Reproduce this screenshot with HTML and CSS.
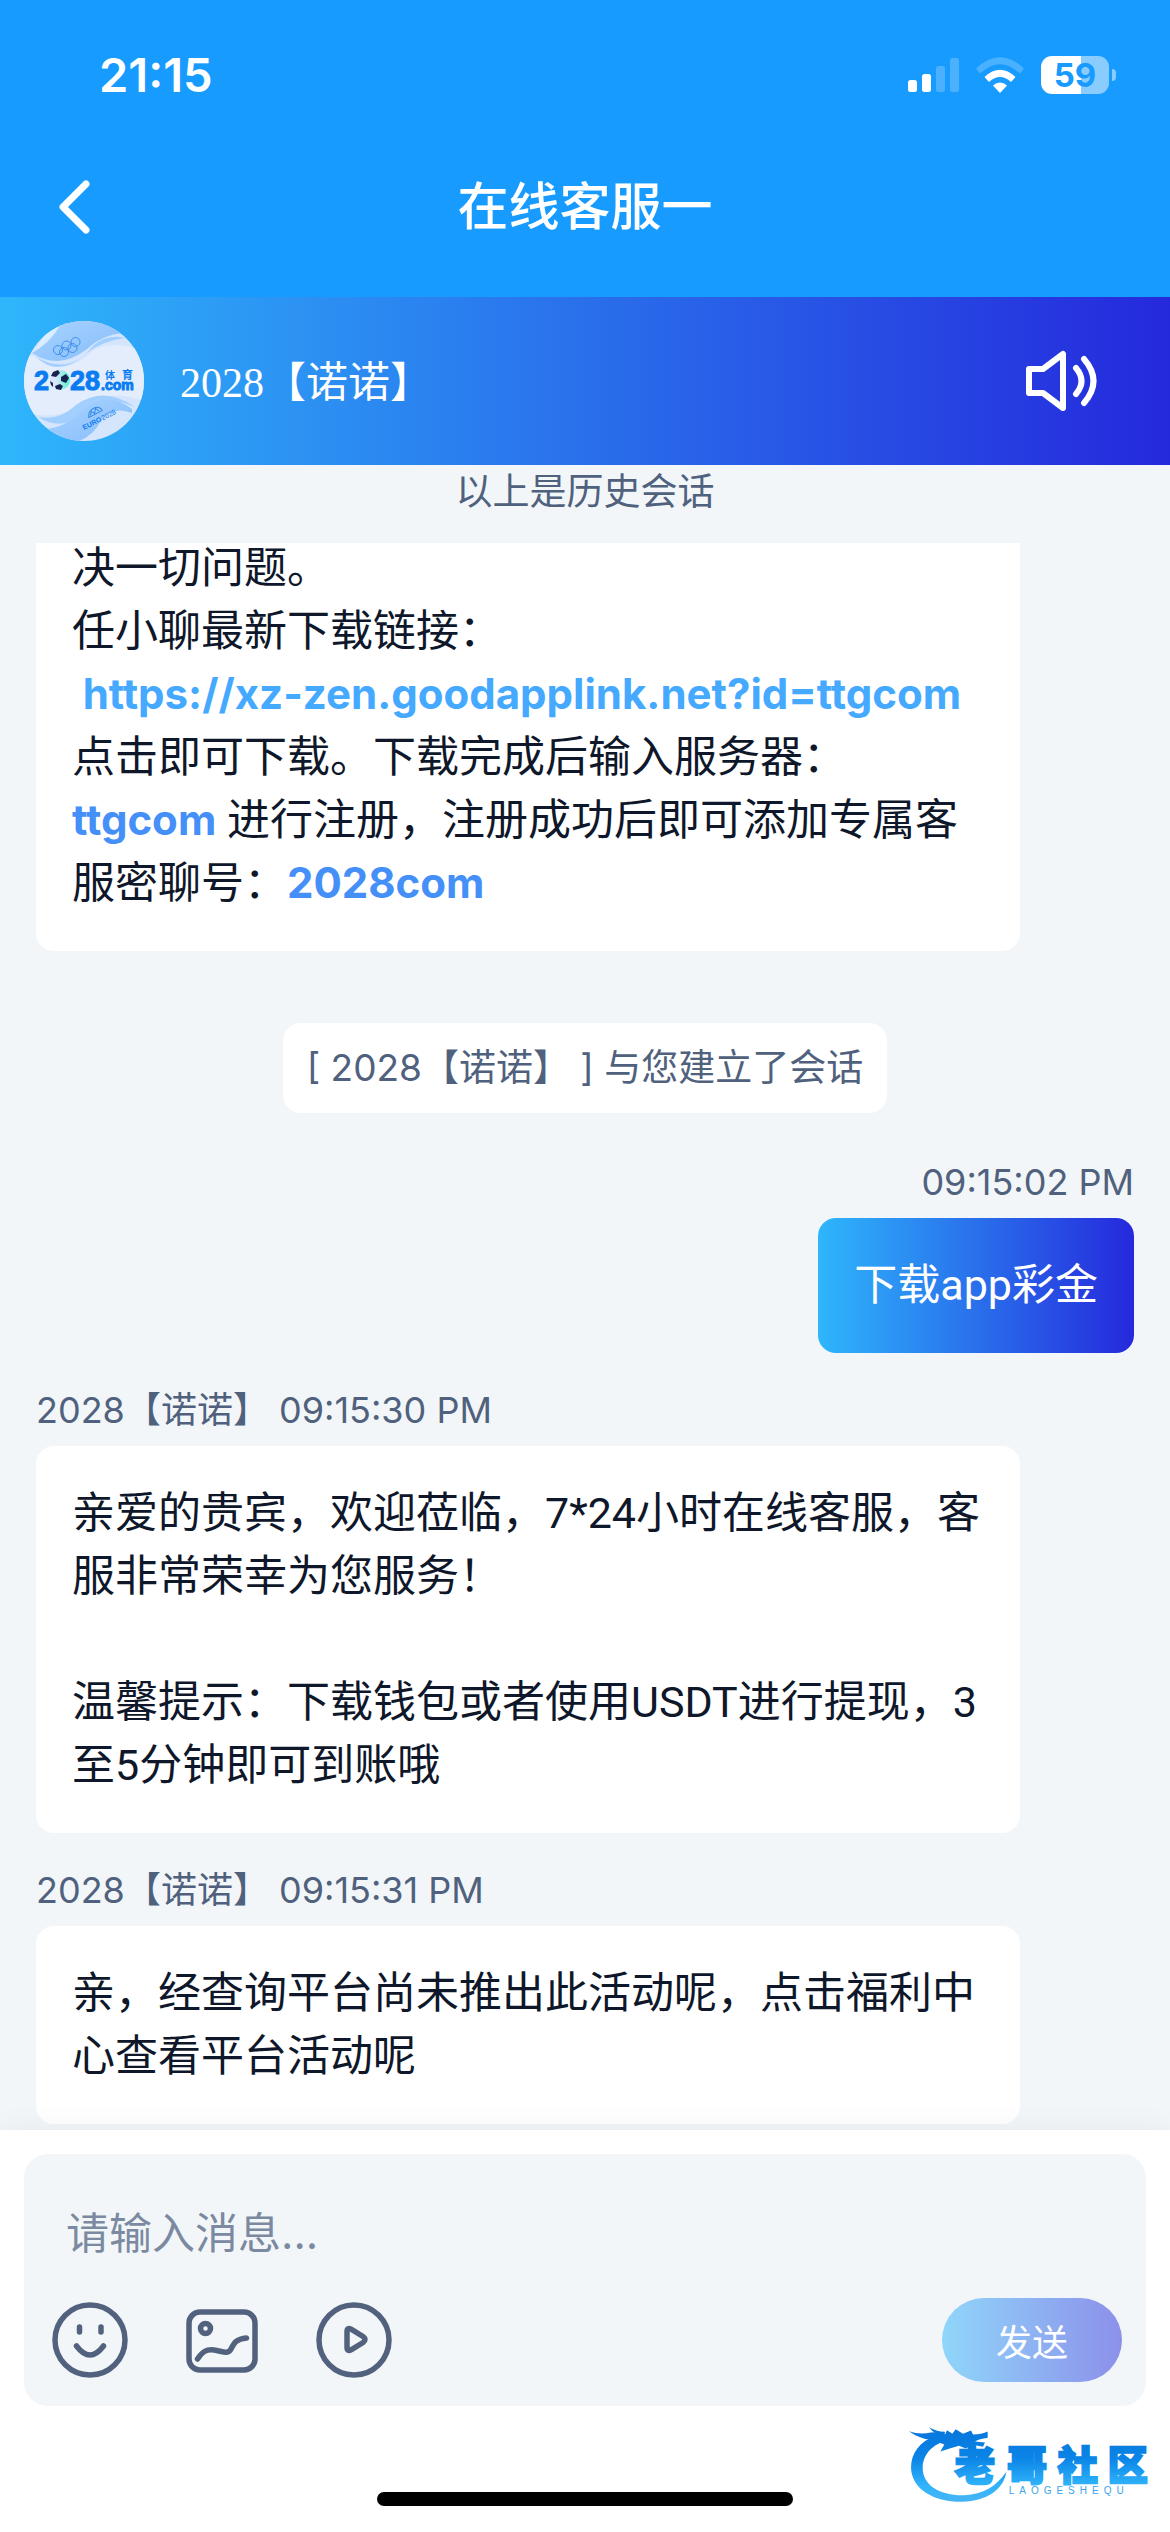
FILE: index.html
```
<!DOCTYPE html>
<html lang="zh-CN">
<head>
<meta charset="utf-8">
<meta name="viewport" content="width=device-width, initial-scale=1">
<title>在线客服一</title>
<link rel="stylesheet" href="styles.css">
</head>
<body>
<div class="app">
  <div class="status">
    <span class="clock">21:15</span>
    <div class="indicators">
      <svg class="signal" viewBox="0 0 51 34" aria-hidden="true">
        <g fill="#fff"><rect y="22" width="9" height="12" rx="2.5"/><rect x="14" y="16" width="9" height="18" rx="2.5"/></g>
        <g fill="#fff" opacity=".22"><rect x="28" y="8" width="9" height="26" rx="2.5"/><rect x="42" width="9" height="34" rx="2.5"/></g>
      </svg>
      <svg class="wifi" viewBox="0 0 48 36" aria-hidden="true">
        <path d="M0 11.500Q24-11 48 11.500L44 16.500Q24-2 4 16.500Z" fill="#fff" opacity=".22"/>
        <path d="M8.500 20Q24 5.500 39.500 20L35 25Q24 15 13 25Z" fill="#fff"/>
        <path d="M17 28.500Q24 22.500 31 28.500L24 36Z" fill="#fff"/>
      </svg>
      <span class="battery"><span class="battery-level">59</span></span>
    </div>
  </div>
  <header class="nav">
    <button class="back" type="button" aria-label="返回">
      <svg viewBox="0 0 32 54" aria-hidden="true"><path d="M28 4L5 27L28 50" fill="none" stroke="#fff" stroke-width="7" stroke-linecap="round" stroke-linejoin="round"/></svg>
    </button>
    <h1 class="title">在线客服一</h1>
  </header>
  <div class="agent">
    <svg class="avatar" viewBox="0 0 120 120" role="img" aria-label="2028体育">
      <defs>
        <clipPath id="disc"><circle cx="60" cy="60" r="60"/></clipPath>
        <linearGradient id="wave" x1="0" x2="1" y1="0" y2="1"><stop offset="0" stop-color="#a9d3ff"/><stop offset="1" stop-color="#86bdfb"/></linearGradient>
        <linearGradient id="ball" x1="0" x2="1"><stop offset=".3" stop-color="#dbe6fb"/><stop offset="1" stop-color="#4ff0d0"/></linearGradient>
      </defs>
      <g clip-path="url(#disc)">
        <rect width="120" height="120" fill="#d5e6fc"/>
        <path d="M0 30Q45 58 68 30Q88 18 120 30V80Q95 70 70 78Q40 100 0 92Z" fill="#e3edfc"/>
        <path d="M0 0H28L10 32Q32 10 45 0Z" fill="#d9efff"/>
        <path d="M12 36Q45 55 68 26Q82 12 101 17Q78 20 63 32Q35 58 12 36Z" fill="#a3cfff"/>
        <path d="M8 32Q26 22 35 6Q45-5 60 0Q80 0 98 12Q78 14 63 28Q35 50 8 32Z" fill="url(#wave)"/>
        <path d="M14 96Q35 100 52 84Q80 64 111 86Q80 72 60 90Q40 112 14 96Z" fill="#a3cfff"/>
        <path d="M108 92Q88 84 76 101Q70 114 55 120Q38 120 22 108Q42 106 58 90Q82 68 108 88Z" fill="url(#wave)"/>
        <g fill="none" stroke="#3589e6" stroke-width=".9"><circle cx="34" cy="29" r="4.500"/><circle cx="42.500" cy="24.500" r="4.500"/><circle cx="51.500" cy="21" r="4.500"/><circle cx="40" cy="31" r="4.500"/><circle cx="48.500" cy="27" r="4.500"/></g>
        <g class="logo-text heavy"><text x="10" y="69" font-size="27">2</text><text x="46" y="69" font-size="27">28</text><text x="77" y="69" font-size="14">.com</text></g>
        <g class="logo-text"><text class="logo-cjk" x="81" y="58" font-size="10">体</text><text class="logo-cjk" x="98" y="58" font-size="11">育</text></g>
        <circle cx="36" cy="59" r="10" fill="url(#ball)"/>
        <path d="M29 51l5-2 2 3-4 4-5-1zM37 56l5-3 3 4-3 5-5-2zM31 65l5-2 3 2-2 4-5-1zM26 60l3 2v4l-2-2z" fill="#16244f"/>
        <g transform="rotate(-27 60 109)"><text class="logo-text" x="60" y="109" font-size="7">EURO</text><text class="logo-text thin" x="81" y="109" font-size="7">2028</text><path d="M70 100q2-6 8-6 7 0 7 6zM72 99l3-3 2 3 3-4 2 4" fill="none" stroke="#3589e6"/></g>
      </g>
    </svg>
    <span class="agent-name">2028【诺诺】</span>
    <button class="sound" type="button" aria-label="声音">
      <svg viewBox="0 0 72 62" aria-hidden="true"><g fill="none" stroke="#fff" stroke-width="6" stroke-linecap="round" stroke-linejoin="round"><path d="M3 19H17L37 4V58L17 43H3Z"/><path d="M50 18Q61 31 50 44M58 9Q77 31 58 53"/></g></svg>
    </button>
  </div>

  <main class="chat">
    <p class="notice">以上是历史会话</p>
    <div class="messages">
      <div class="bubble scrolled">决一切问题。<br>任小聊最新下载链接：<br>&nbsp;<a class="url" href="https://xz-zen.goodapplink.net?id=ttgcom">https://xz-zen.goodapplink.net?id=ttgcom</a><br>点击即可下载。下载完成后输入服务器：<br><b>ttgcom</b> 进行注册，注册成功后即可添加专属客<br>服密聊号：<b>2028com</b></div>
      <p class="system">[ 2028【诺诺】 ] 与您建立了会话</p>
      <p class="meta own">09:15:02 PM</p>
      <div class="bubble mine">下载app彩金</div>
      <p class="meta">2028【诺诺】 09:15:30 PM</p>
      <div class="bubble">亲爱的贵宾，欢迎莅临，7*24小时在线客服，客服非常荣幸为您服务！<br><br>温馨提示：下载钱包或者使用USDT进行提现，3至5分钟即可到账哦</div>
      <p class="meta">2028【诺诺】 09:15:31 PM</p>
      <div class="bubble">亲，经查询平台尚未推出此活动呢，点击福利中心查看平台活动呢</div>
    </div>
  </main>

  <footer class="dock">
    <form class="composer">
      <textarea class="entry" rows="1" placeholder="请输入消息..." aria-label="请输入消息"></textarea>
      <div class="tools">
        <button class="tool" type="button" aria-label="表情">
          <svg viewBox="0 0 84 84" aria-hidden="true"><circle cx="42" cy="42" r="35"/><path d="M31.500 29V34M53 29V34M28.500 48Q42 66 55.500 48"/></svg>
        </button>
        <button class="tool" type="button" aria-label="图片">
          <svg viewBox="0 0 84 84" aria-hidden="true"><rect x="9" y="14" width="66" height="58" rx="11"/><circle cx="25.500" cy="30.500" r="5"/><path d="M17.500 61C22 54 26 51 34 52S48 57 51 51S56 41 66.500 40"/></svg>
        </button>
        <button class="tool" type="button" aria-label="视频">
          <svg viewBox="0 0 84 84" aria-hidden="true"><circle cx="42" cy="42" r="35"/><path d="M35 33.500Q35 29 39.500 31.500L51 38.500Q55 41.500 51 44.500L39.500 51.500Q35 54 35 49.500Z"/></svg>
        </button>
        <button class="send" type="submit">发送</button>
      </div>
    </form>
    <div class="home-bar"></div>
    <svg class="watermark" viewBox="145 475 735 260" role="img" aria-label="老哥社区">
      <defs><linearGradient id="ink" gradientUnits="userSpaceOnUse" x1="0" x2="0" y1="510" y2="720"><stop offset="0" stop-color="#0876dc"/><stop offset=".4" stop-color="#0a84e6"/><stop offset=".8" stop-color="#31b4fb"/><stop offset="1" stop-color="#45b4f5"/></linearGradient></defs>
      <g fill="url(#ink)">
        <path d="M228 528C180 545 154 580 154 624C156 690 225 728 310 726C380 724 432 690 440 636C410 680 370 704 315 706C240 708 188 676 189 622C191 580 222 552 262 543L300 532Z"/>
        <path d="M148 514Q180 526 214 518Q238 516 256 524L262 511L278 522L288 508L310 522L334 512L340 524Q366 524 384 515L384 534Q358 538 346 545L376 548L370 561L340 555L318 566L298 558L270 566L242 575L254 554L215 540Q178 536 148 514Z"/>
        <path d="M208 502Q228 514 256 516L254 528Q224 524 208 502Z"/>
        <g class="mark-cjk"><text x="286" y="660">老</text><text x="442" y="660">哥</text><text x="594" y="660">社</text><text x="744" y="660">区</text></g>
      </g>
      <text class="mark-latin" x="447" y="704">LAOGESHEQU</text>
    </svg>
  </footer>
</div>
</body>
</html>
```
FILE: styles.css
```
* { box-sizing: border-box; }
body, h1, p { margin: 0; }
body {
  background: #fff;
  color: #0f172a;
  font-family: Inter, "Noto Sans CJK SC", sans-serif;
}
button, textarea {
  border: 0;
  padding: 0;
  margin: 0;
  background: none;
  font-family: inherit;
}
svg { display: block; }

.app {
  min-height: 100vh;
  display: flex;
  flex-direction: column;
}

/* status bar and title */
.status {
  display: flex;
  justify-content: space-between;
  align-items: center;
  height: 117px;
  padding: 32px 54px 0 99px;
  background: #189bff;
}
.clock {
  color: #fff;
  font-size: 47px;
  font-weight: 600;
}
.indicators { display: flex; align-items: center; }
.signal { width: 51px; height: 34px; }
.wifi { width: 48px; height: 36px; margin: 0 17px; }
.battery {
  display: flex;
  align-items: center;
}
.battery::after {
  content: "";
  width: 4px;
  height: 12px;
  margin-left: 3px;
  border-radius: 0 6px 6px 0;
  background: #8bccff;
}
.battery-level {
  width: 68px;
  height: 38px;
  border-radius: 11px;
  background: linear-gradient(90deg, #fff 59%, #8bccff 59%);
  color: #189bff;
  font-size: 33px;
  font-weight: 700;
  line-height: 38px;
  text-align: center;
}
.nav {
  display: grid;
  grid-template-columns: 1fr auto 1fr;
  align-items: center;
  height: 180px;
  padding: 0 58px;
  background: #189bff;
}
.back { width: 32px; }
.title {
  color: #fff;
  font-size: 51px;
  font-weight: 500;
  line-height: 72px;
}

/* agent strip */
.agent {
  display: flex;
  align-items: center;
  height: 168px;
  padding: 0 72px 0 24px;
  background: linear-gradient(90deg, #2eb6fb, #2529dc);
}
.avatar { width: 120px; height: 120px; }
.logo-text { fill: #0a7cf2; font-family: "Liberation Sans", sans-serif; font-weight: 700; }
.heavy { stroke: #0a7cf2; stroke-width: 1px; }
.logo-cjk { font-family: "Noto Sans CJK SC", sans-serif; }
.thin { font-weight: 400; }
.agent-name {
  flex: 1;
  margin-left: 36px;
  padding-bottom: 6px;
  color: #fff;
  font-family: "Liberation Serif", "Noto Sans CJK SC", serif;
  font-size: 42px;
}
.sound svg { width: 72px; height: 62px; }

/* conversation */
.chat {
  flex: 1;
  background: #f2f6f9;
}
.notice {
  padding-bottom: 24px;
  color: #50617d;
  font-size: 37px;
  line-height: 54px;
  text-align: center;
}
.messages {
  display: flex;
  flex-direction: column;
  align-items: flex-start;
  padding: 0 36px 6px;
  overflow: hidden;
}
.bubble {
  width: 984px;
  max-width: 100%;
  padding: 36px;
  border-radius: 18px;
  background: #fff;
  font-family: Roboto, "Noto Sans CJK SC", sans-serif;
  font-size: 43px;
  line-height: 63px;
}
.scrolled { margin-top: -42px; }
.bubble b, .url {
  font-family: Inter, sans-serif;
  font-size: 42px;
  font-weight: 700;
  line-height: 1;
}
.bubble b { color: #4590f8; }
.url {
  color: #44a9ff;
  text-decoration: none;
}
.mine {
  align-self: flex-end;
  width: auto;
  background: linear-gradient(90deg, #2eb6fb, #2529dc);
  color: #fff;
}
.system {
  align-self: center;
  margin: 72px 0 12px;
  padding: 18px 24px;
  border-radius: 18px;
  background: #fff;
  color: #50617d;
  font-size: 37px;
  line-height: 54px;
}
.meta {
  margin: 30px 0 9px;
  color: #50617d;
  font-size: 36px;
  line-height: 54px;
}
.own { align-self: flex-end; }

/* message entry */
.dock {
  position: relative;
  padding: 24px 24px 26px;
  background: #fff;
  box-shadow: 0 0 30px rgba(0, 0, 0, 0.06);
}
.composer {
  padding: 24px;
  border-radius: 24px;
  background: #f2f6f9;
}
.entry {
  display: block;
  width: 100%;
  height: 120px;
  padding: 24px 18px 0;
  resize: none;
  color: #0f172a;
  font-size: 43px;
  line-height: 63px;
}
.entry::placeholder { color: #7b8aa1; opacity: 1; }
.tools {
  display: flex;
  align-items: center;
  gap: 48px;
}
.tool { width: 84px; height: 84px; }
.tool svg {
  fill: none;
  stroke: #52627e;
  stroke-width: 5.5px;
  stroke-linecap: round;
}
.send {
  width: 180px;
  height: 84px;
  margin-left: auto;
  border-radius: 42px;
  background: linear-gradient(90deg, #90d6fa, #8c90ea);
  color: #fff;
  font-size: 36px;
  font-weight: 400;
}
.home-bar {
  width: 416px;
  height: 14px;
  margin: 86px auto 0;
  border-radius: 7px;
  background: #000;
}
.watermark {
  position: absolute;
  right: 17px;
  bottom: 27px;
  width: 245px;
  height: 87px;
}
.mark-cjk {
  stroke: url(#ink);
  stroke-width: 7px;
  font-family: "Noto Sans CJK SC", sans-serif;
  font-size: 120px;
  font-weight: 900;
}
.mark-latin {
  fill: #3aa5ea;
  font-family: "Liberation Sans", sans-serif;
  font-size: 30px;
  letter-spacing: 15px;
}
```
